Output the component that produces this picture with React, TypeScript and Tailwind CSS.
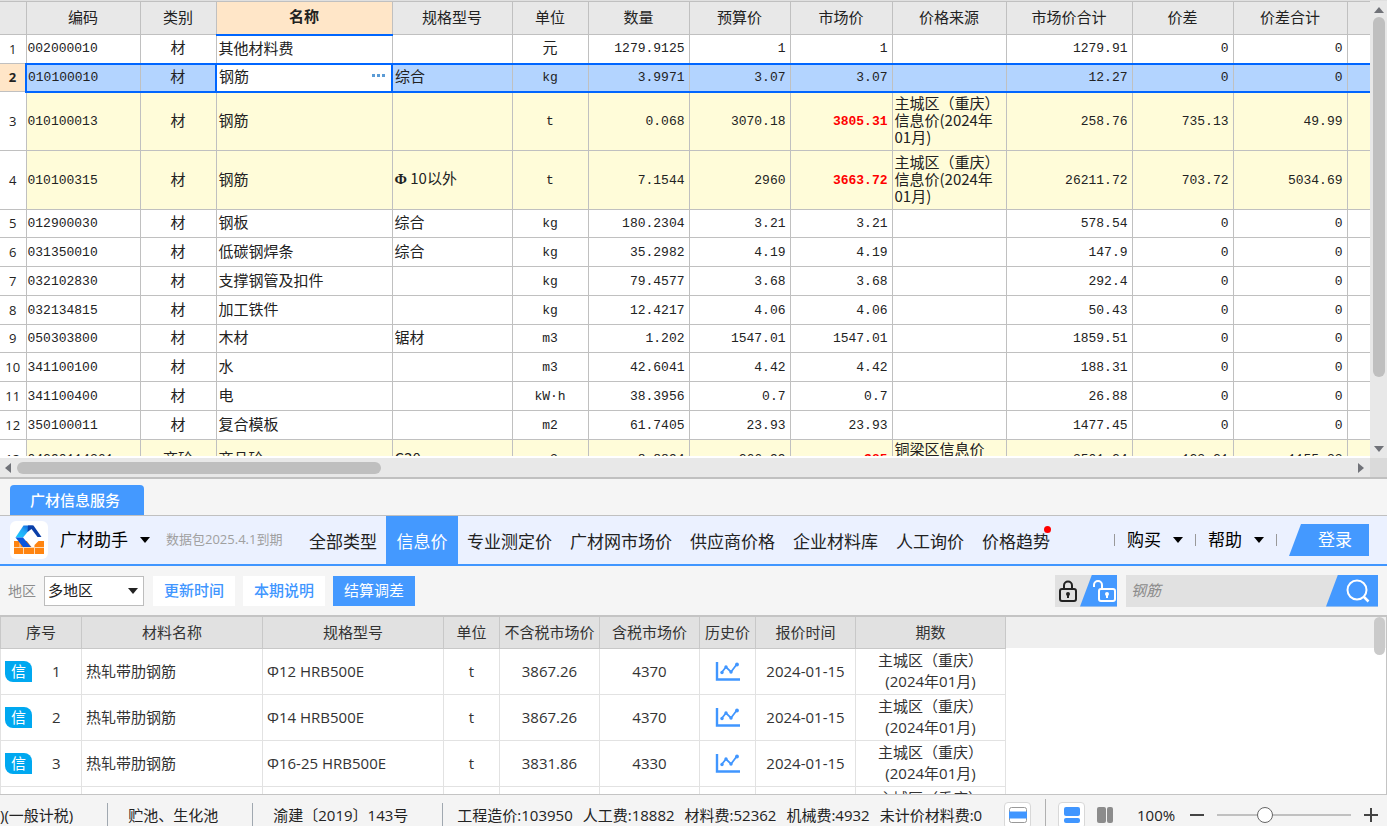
import { useState } from 'react';
import type { ReactNode } from 'react';

type Material = {
  code: string;
  kind: string;
  name: string;
  spec?: ReactNode;
  unit: string;
  qty: string;
  budget: string;
  market: string;
  source?: ReactNode;
  total: string;
  diff: string;
  diffTotal: string;
  adjusted?: boolean;
  height: string;
};

const chongqing = (
  <>
    主城区（重庆）
    <br />
    信息价(2024年
    <br />
    01月)
  </>
);

const MATERIALS: Material[] = [
  { code: '002000010', kind: '材', name: '其他材料费', unit: '元', qty: '1279.9125', budget: '1', market: '1', total: '1279.91', diff: '0', diffTotal: '0', height: 'h-[29px]' },
  { code: '010100010', kind: '材', name: '钢筋', spec: '综合', unit: 'kg', qty: '3.9971', budget: '3.07', market: '3.07', total: '12.27', diff: '0', diffTotal: '0', height: 'h-7' },
  { code: '010100013', kind: '材', name: '钢筋', unit: 't', qty: '0.068', budget: '3070.18', market: '3805.31', source: chongqing, total: '258.76', diff: '735.13', diffTotal: '49.99', adjusted: true, height: 'h-[59px]' },
  {
    code: '010100315', kind: '材', name: '钢筋',
    spec: <><span className="font-['Liberation_Serif'] font-bold">Φ</span> 10以外</>,
    unit: 't', qty: '7.1544', budget: '2960', market: '3663.72', source: chongqing, total: '26211.72', diff: '703.72', diffTotal: '5034.69', adjusted: true, height: 'h-[59px]',
  },
  { code: '012900030', kind: '材', name: '钢板', spec: '综合', unit: 'kg', qty: '180.2304', budget: '3.21', market: '3.21', total: '578.54', diff: '0', diffTotal: '0', height: 'h-7' },
  { code: '031350010', kind: '材', name: '低碳钢焊条', spec: '综合', unit: 'kg', qty: '35.2982', budget: '4.19', market: '4.19', total: '147.9', diff: '0', diffTotal: '0', height: 'h-[29px]' },
  { code: '032102830', kind: '材', name: '支撑钢管及扣件', unit: 'kg', qty: '79.4577', budget: '3.68', market: '3.68', total: '292.4', diff: '0', diffTotal: '0', height: 'h-[29px]' },
  { code: '032134815', kind: '材', name: '加工铁件', unit: 'kg', qty: '12.4217', budget: '4.06', market: '4.06', total: '50.43', diff: '0', diffTotal: '0', height: 'h-[29px]' },
  { code: '050303800', kind: '材', name: '木材', spec: '锯材', unit: 'm3', qty: '1.202', budget: '1547.01', market: '1547.01', total: '1859.51', diff: '0', diffTotal: '0', height: 'h-7' },
  { code: '341100100', kind: '材', name: '水', unit: 'm3', qty: '42.6041', budget: '4.42', market: '4.42', total: '188.31', diff: '0', diffTotal: '0', height: 'h-[29px]' },
  { code: '341100400', kind: '材', name: '电', unit: 'kW·h', qty: '38.3956', budget: '0.7', market: '0.7', total: '26.88', diff: '0', diffTotal: '0', height: 'h-[29px]' },
  { code: '350100011', kind: '材', name: '复合模板', unit: 'm2', qty: '61.7405', budget: '23.93', market: '23.93', total: '1477.45', diff: '0', diffTotal: '0', height: 'h-[29px]' },
  {
    code: '04290114361', kind: '商砼', name: '商品砼', spec: 'C30', unit: 'm3', qty: '8.8894', budget: '266.99', market: '385',
    source: <>铜梁区信息价<br />(2024年01月)</>,
    total: '3501.24', diff: '123.21', diffTotal: '1155.33', adjusted: true, height: 'h-9',
  },
];

const MATERIAL_COLUMNS = [
  { label: '', width: 'w-[26px]' },
  { label: '编码', width: 'w-[114px]' },
  { label: '类别', width: 'w-[76px]' },
  { label: '名称', width: 'w-[176px]' },
  { label: '规格型号', width: 'w-[120px]' },
  { label: '单位', width: 'w-[76px]' },
  { label: '数量', width: 'w-[101px]' },
  { label: '预算价', width: 'w-[101px]' },
  { label: '市场价', width: 'w-[102px]' },
  { label: '价格来源', width: 'w-[114px]' },
  { label: '市场价合计', width: 'w-[126px]' },
  { label: '价差', width: 'w-[101px]' },
  { label: '价差合计', width: 'w-[114px]' },
  { label: '', width: '' },
];

const TABS = ['全部类型', '信息价', '专业测定价', '广材网市场价', '供应商价格', '企业材料库', '人工询价', '价格趋势'];

const QUOTES = [
  { spec: 'Φ12 HRB500E', net: '3867.26', gross: '4370' },
  { spec: 'Φ14 HRB500E', net: '3867.26', gross: '4370' },
  { spec: 'Φ16-25 HRB500E', net: '3831.86', gross: '4330' },
  { spec: 'Φ28 HRB500E', net: '3831.86', gross: '4330' },
];

const QUOTE_COLUMNS = [
  { label: '序号', width: 'w-[81px]' },
  { label: '材料名称', width: 'w-[181px]' },
  { label: '规格型号', width: 'w-[181px]' },
  { label: '单位', width: 'w-14' },
  { label: '不含税市场价', width: 'w-[100px]' },
  { label: '含税市场价', width: 'w-[100px]' },
  { label: '历史价', width: 'w-14' },
  { label: '报价时间', width: 'w-[100px]' },
  { label: '期数', width: 'w-[150px]' },
];

function Caret({ className = '' }: { className?: string }) {
  return (
    <svg viewBox="0 0 10 6" className={`h-1.5 w-2.5 ${className}`} fill="currentColor" aria-hidden="true">
      <path d="M0 0h10L5 6z" />
    </svg>
  );
}

function Logo() {
  return (
    <svg viewBox="0 0 38 38" className="size-[38px] shrink-0" aria-hidden="true">
      <defs>
        <linearGradient id="logo-cyan" x1="0" y1="1" x2="1" y2="0">
          <stop offset="0" stopColor="#1bd0ff" />
          <stop offset="0.5" stopColor="#23a8f8" />
          <stop offset="1" stopColor="#0d4fd0" />
        </linearGradient>
      </defs>
      <rect width="38" height="38" rx="6" fill="#fff" />
      <path d="M4 20h30v13H4z" fill="#ff8410" />
      <path d="M4 26.500h30M13.500 27v6M24.500 27v6M10 20v6M28.500 22v4" stroke="#ffd9b0" strokeWidth="1" />
      <path d="M16 19h16l-7.500 7h-3z" fill="#fff" />
      <path d="M24.500 26v-2l4-4H34v6z" fill="#ff8410" />
      <path d="M5.500 16.500L13.500 4.500H23l-10 12z" fill="url(#logo-cyan)" />
      <path d="M5.500 16.500H13l8 9.500h-8z" fill="#0a55dd" />
      <path d="M18 4.500h5.500l8 11.500h-4L21.500 8l-4 3z" fill="#0b3fa8" />
    </svg>
  );
}

function TrendIcon() {
  return (
    <svg viewBox="0 0 26 20" className="h-5 w-[26px]" fill="none" stroke="#4096ff" aria-hidden="true">
      <path d="M2 1v17.500H25" strokeWidth="2.400" />
      <path d="M7 11l4-5 5 5 6-8" strokeWidth="1.800" />
      <g fill="#4096ff" stroke="none">
        <circle cx="7" cy="11.500" r="1.700" />
        <circle cx="11" cy="6" r="1.700" />
        <circle cx="16" cy="11" r="1.700" />
        <circle cx="22" cy="3.500" r="1.900" />
      </g>
    </svg>
  );
}

function MaterialTable() {
  const [selected, setSelected] = useState(1);
  const latin = "font-['Liberation_Mono'] text-[13px]";

  return (
    <table className="w-full table-fixed border-collapse text-[15px] leading-[17px] text-[#222]">
      <thead>
        <tr className="h-[33px] bg-[#e8e8e8]">
          {MATERIAL_COLUMNS.map((col, i) => (
            <th
              key={i}
              className={`border border-[#c0c0c0] p-0 pb-1 whitespace-nowrap first:border-l-0 last:border-r-0 ${col.width} ${
                col.label === '名称' ? 'border-b-2 border-b-[#0066ff] bg-[#ffe6c8] font-bold' : 'font-normal'
              }`}
            >
              {col.label}
            </th>
          ))}
        </tr>
      </thead>
      <tbody>
        {MATERIALS.map((m, i) => {
          const active = i === selected;
          const bg = active ? 'bg-[#b3d4ff]' : m.adjusted ? 'bg-[#fffcd9]' : 'bg-white';
          const cell = active ? 'border border-y-2 border-[#c0c0c0] border-y-[#0066ff]' : 'border border-[#c0c0c0]';
          const text = `${cell} p-0 pb-1`;
          const num = `${cell} ${latin} p-0 pr-1 text-right`;
          const unit = /^[a-z]/.test(m.unit) ? `${cell} ${latin} p-0` : text;
          return (
            <tr key={m.code} className={`${m.height} ${bg}`} onClick={() => setSelected(i)}>
              <th
                className={`border border-l-0 border-[#c0c0c0] p-0 font-['Open_Sans'] text-[13px] ${
                  active ? 'border-r-2 border-r-[#0066ff] bg-[#ffe6c8] font-bold' : 'bg-white font-normal'
                }`}
              >
                {i + 1}
              </th>
              <td className={`${cell} ${latin} p-0 pl-px`}>{m.code}</td>
              <td className={`${text} text-center`}>{m.kind}</td>
              <td className={active ? 'border-2 border-[#0066ff] bg-white p-0 pb-1 pl-0.5' : `${text} pl-0.5`}>
                {active ? (
                  <div className="flex items-center justify-between pr-1">
                    {m.name}
                    <button type="button" aria-label="更多" className="flex gap-0.5 p-0.5">
                      <i className="size-[3px] bg-[#5b9bd5]" />
                      <i className="size-[3px] bg-[#5b9bd5]" />
                      <i className="size-[3px] bg-[#5b9bd5]" />
                    </button>
                  </div>
                ) : (
                  m.name
                )}
              </td>
              <td className={`${text} pl-0.5`}>{m.spec}</td>
              <td className={`${unit} text-center`}>{m.unit}</td>
              <td className={num}>{m.qty}</td>
              <td className={num}>{m.budget}</td>
              <td className={`${num} ${m.adjusted ? 'font-bold text-[#ff0000]' : ''}`}>{m.market}</td>
              <td className={`${text} pl-0.5 whitespace-nowrap`}>{m.source}</td>
              <td className={num}>{m.total}</td>
              <td className={num}>{m.diff}</td>
              <td className={num}>{m.diffTotal}</td>
              <td className={`${cell} border-r-0 p-0`} />
            </tr>
          );
        })}
      </tbody>
    </table>
  );
}

function QuoteTable() {
  return (
    <table className="w-[1006px] table-fixed border-collapse text-center text-[15px] leading-[21px] text-[#333]">
      <thead>
        <tr className="h-[31px] bg-[#e1e1e1]">
          {QUOTE_COLUMNS.map((col) => (
            <th key={col.label} className={`border border-t-0 border-[#c8c8c8] p-0 font-normal whitespace-nowrap ${col.width}`}>
              {col.label}
            </th>
          ))}
        </tr>
      </thead>
      <tbody className="[&_td]:border [&_td]:border-[#e2e2e2]">
        {QUOTES.map((q, i) => (
          <tr key={q.spec} className="h-[46px] bg-white">
            <td className="p-0">
              <div className="flex items-center gap-5 pl-1">
                <span className="flex h-[21px] w-[27px] items-center justify-center rounded-tr-lg rounded-bl-lg bg-[#00a8f0] text-[15px] text-white">
                  信
                </span>
                {i + 1}
              </div>
            </td>
            <td className="p-0 pl-1 text-left">热轧带肋钢筋</td>
            <td className="p-0 pl-1 text-left">{q.spec}</td>
            <td className="p-0">t</td>
            <td className="p-0">{q.net}</td>
            <td className="p-0">{q.gross}</td>
            <td className="p-0">
              <button type="button" aria-label="历史价" className="mx-auto block">
                <TrendIcon />
              </button>
            </td>
            <td className="p-0">2024-01-15</td>
            <td className="p-0">
              主城区（重庆）
              <br />
              (2024年01月)
            </td>
          </tr>
        ))}
      </tbody>
    </table>
  );
}

function StatusBar() {
  const divider = <span className="h-6 w-px shrink-0 bg-[#a0a8b0]" />;

  return (
    <footer className="h-[31px] shrink-0 overflow-hidden bg-[#f4f4f4]">
      <div className="flex h-10 items-center text-[15px] whitespace-nowrap">
        <span className="pr-[34px]">)(一般计税)</span>
        {divider}
        <span className="pr-[34px] pl-5">贮池、生化池</span>
        {divider}
        <span className="pr-[34px] pl-5">渝建〔2019〕143号</span>
        {divider}
        <div className="flex gap-2.5 pl-3.5">
          <span>工程造价:103950</span>
          <span>人工费:18882</span>
          <span>材料费:52362</span>
          <span>机械费:4932</span>
          <span>未计价材料费:0</span>
        </div>
        <div className="ml-auto flex items-center pr-2">
          <button type="button" aria-label="单栏" className="flex size-[27px] items-center justify-center rounded-sm border border-[#d8d8d8] bg-white">
            <svg viewBox="0 0 18 16" className="h-4 w-[18px]" fill="none">
              <rect x="0.500" y="0.500" width="17" height="15" rx="2" stroke="#999" />
              <path d="M0 4.500h18v7H0z" fill="#4096ff" />
            </svg>
          </button>
          <span className="mr-3 ml-3.5 h-8 w-px bg-[#b0b0b0]" />
          <button type="button" aria-label="上下布局" className="flex size-[27px] items-center justify-center rounded-sm border border-[#d8d8d8] bg-white">
            <svg viewBox="0 0 16 16" className="size-4" fill="#4096ff">
              <rect width="16" height="9" rx="2" />
              <rect y="11" width="16" height="5" rx="2" />
            </svg>
          </button>
          <button type="button" aria-label="左右布局" className="ml-3">
            <svg viewBox="0 0 16 16" className="size-4" fill="#8c8c8c">
              <rect width="9" height="16" rx="2" />
              <rect x="10" width="6" height="16" rx="2" />
            </svg>
          </button>
          <span className="ml-6 w-10">100%</span>
          <button type="button" aria-label="缩小" className="ml-3">
            <svg viewBox="0 0 16 16" className="size-4" stroke="#444" strokeWidth="2">
              <path d="M1 8h14" />
            </svg>
          </button>
          <input
            type="range"
            aria-label="缩放"
            min={0}
            max={100}
            defaultValue={34}
            className="mx-3 h-4 w-[134px] appearance-none bg-transparent [&::-webkit-slider-runnable-track]:h-0.5 [&::-webkit-slider-runnable-track]:bg-[#c0c0c0] [&::-webkit-slider-thumb]:-mt-[7px] [&::-webkit-slider-thumb]:size-4 [&::-webkit-slider-thumb]:appearance-none [&::-webkit-slider-thumb]:rounded-full [&::-webkit-slider-thumb]:border [&::-webkit-slider-thumb]:border-[#666] [&::-webkit-slider-thumb]:bg-white"
          />
          <button type="button" aria-label="放大">
            <svg viewBox="0 0 16 16" className="size-4" stroke="#444" strokeWidth="2">
              <path d="M1 8h14M8 1v14" />
            </svg>
          </button>
        </div>
      </div>
    </footer>
  );
}

export default function App() {
  const [tab, setTab] = useState('信息价');
  const [keyword, setKeyword] = useState('钢筋');

  return (
    <div className="flex h-screen flex-col overflow-hidden bg-[#f5f5f5] font-['Open_Sans','Noto_Sans_CJK_SC',sans-serif] text-[#222]">
      <section className="flex min-h-0 flex-1 flex-col border-t border-[#e0e0e0] bg-white">
        <div className="flex min-h-0 flex-1">
          <div className="mb-0.5 min-w-0 flex-1 overflow-hidden font-['Noto_Sans_CJK_SC',sans-serif]">
            <MaterialTable />
          </div>
          <div className="flex w-[17px] flex-col items-center justify-between bg-[#e8e8e8] py-1.5 text-[#707278]">
            <Caret className="rotate-180" />
            <div className="mt-1 mb-auto h-[81%] w-3 rounded-full bg-[#bfbfbf]" />
            <Caret />
          </div>
        </div>
        <div className="flex h-[19px] shrink-0 items-center bg-[#e8e8e8] text-[#707278]">
          <Caret className="ml-[3px] rotate-90" />
          <div className="ml-1 h-3 w-[364px] rounded-full bg-[#bfbfbf]" />
          <Caret className="mr-1 ml-auto -rotate-90" />
          <div className="h-full w-[17px] bg-[#dadada]" />
        </div>
      </section>

      <div className="flex h-[39px] shrink-0 items-end border-t-2 border-b border-[#c0c0c0] pl-2.5">
        <button type="button" className="h-[30px] w-[134px] rounded-t-sm bg-[#4499ff] pr-1 text-[15px] font-medium text-white">
          广材信息服务
        </button>
      </div>

      <nav className="flex h-[50px] shrink-0 items-center border-b-2 border-[#4096ff] bg-[#ebf1ff] text-[17px] whitespace-nowrap">
        <div className="flex w-[300px] items-center pl-2.5">
          <Logo />
          <button type="button" className="ml-3 flex items-center gap-3 text-black">
            广材助手
            <Caret />
          </button>
          <span className="ml-4 text-[13px] text-[#a0a0a0]">数据包2025.4.1到期</span>
        </div>
        <div className="flex self-stretch">
          {TABS.map((name) => (
            <button
              key={name}
              type="button"
              onClick={() => setTab(name)}
              className={`relative px-[9px] pt-1 ${name === tab ? 'min-w-[72px] bg-[#4499ff] text-white' : 'text-[#222]'}`}
            >
              {name}
              {name === '价格趋势' && <span className="absolute top-2.5 right-2 size-[7px] rounded-full bg-[#ff0000]" />}
            </button>
          ))}
        </div>
        <div className="ml-auto flex items-center pr-[18px] text-black">
          <span className="mr-3 h-3 w-px bg-[#999]" />
          <button type="button" className="flex items-center gap-3">
            购买
            <Caret />
          </button>
          <span className="mx-3 h-3 w-px bg-[#999]" />
          <button type="button" className="flex items-center gap-3">
            帮助
            <Caret />
          </button>
          <span className="mx-3 h-3 w-px bg-[#999]" />
          <button type="button" className="h-8 w-20 bg-[#4499ff] pl-3 text-white [clip-path:polygon(12px_0,100%_0,100%_100%,0_100%)]">
            登录
          </button>
        </div>
      </nav>

      <div className="flex h-[49px] shrink-0 items-center pl-2 text-[15px] whitespace-nowrap">
        <label htmlFor="region" className="mr-2 text-sm text-[#8c8c8c]">
          地区
        </label>
        <div className="relative mr-px">
          <select id="region" defaultValue="多地区" className="h-[30px] w-[100px] appearance-none border border-[#bdbdbd] bg-white pl-[3px] text-[#222]">
            <option>多地区</option>
            <option>主城区</option>
          </select>
          <Caret className="pointer-events-none absolute top-3 right-1.5" />
        </div>
        <button type="button" className="ml-2 h-[30px] w-[82px] bg-white font-medium text-[#4096ff]">
          更新时间
        </button>
        <button type="button" className="ml-2 h-[30px] w-[82px] bg-white font-medium text-[#4096ff]">
          本期说明
        </button>
        <button type="button" className="ml-2 h-[30px] w-[82px] bg-[#4499ff] text-white">
          结算调差
        </button>

        <div className="ml-auto flex h-8 w-[62px] bg-[#e1e1e1]">
          <button type="button" aria-label="锁定" className="flex w-[25px] items-center justify-center">
            <svg viewBox="0 0 18 22" className="h-[22px] w-[18px]" fill="none" stroke="#222" strokeWidth="2">
              <rect x="1" y="9" width="16" height="12" rx="2" />
              <path d="M5 9V5.500a4 4 0 0 1 8 0V9" />
              <path d="M9 14v4" />
              <circle cx="9" cy="14" r="1" fill="#222" />
            </svg>
          </button>
          <button type="button" aria-label="解锁" className="flex flex-1 items-center justify-end bg-[#4499ff] pr-px [clip-path:polygon(12px_0,100%_0,100%_100%,0_100%)]">
            <svg viewBox="0 0 24 22" className="h-[22px] w-6" fill="none" stroke="#fff" strokeWidth="2">
              <rect x="7" y="9" width="16" height="12" rx="2" />
              <path d="M2 7V5a4 4 0 0 1 8 0v4" />
              <path d="M15 14v4" />
              <circle cx="15" cy="14" r="1" fill="#fff" />
            </svg>
          </button>
        </div>
        <form className="mr-[9px] ml-[9px] flex h-8 w-[252px] bg-[#e1e1e1]" onSubmit={(e) => e.preventDefault()}>
          <input
            type="text"
            aria-label="搜索材料"
            value={keyword}
            onChange={(e) => setKeyword(e.target.value)}
            className="min-w-0 flex-1 bg-transparent pl-[5px] text-[15px] text-[#8c8c8c] italic outline-none"
          />
          <button type="submit" aria-label="搜索" className="flex w-[52px] items-center justify-center bg-[#4499ff] pl-3 [clip-path:polygon(12px_0,100%_0,100%_100%,0_100%)]">
            <svg viewBox="0 0 24 24" className="size-6" fill="none" stroke="#fff" strokeWidth="2">
              <circle cx="11" cy="11" r="9.500" />
              <path d="M17.500 17.500l5 5" strokeWidth="2.500" />
            </svg>
          </button>
        </form>
      </div>

      <section className="flex h-[180px] shrink-0 overflow-hidden border-t-2 border-r border-b border-[#c4c4c4] bg-white">
        <QuoteTable />
        <div className="h-[31px] flex-1 bg-[#efefef]" />
        <div className="w-3 bg-linear-to-b from-[#efefef] from-[31px] to-white to-[31px]">
          <div className="h-[38px] w-[11px] rounded-full bg-[#cacaca]" />
        </div>
      </section>

      <StatusBar />
    </div>
  );
}
